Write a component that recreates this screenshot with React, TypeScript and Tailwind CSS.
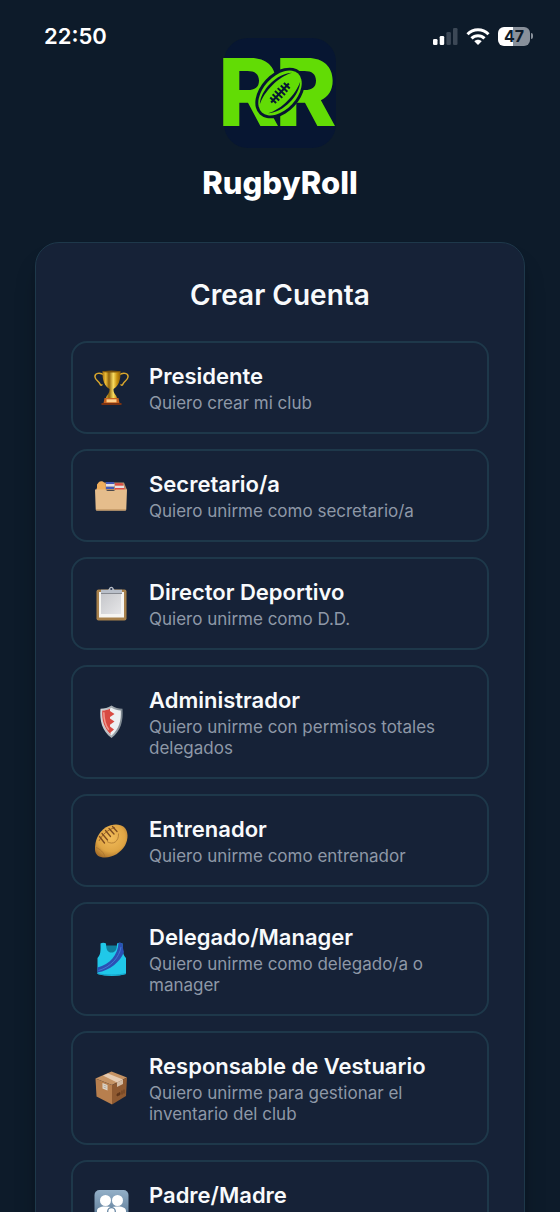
import type { ReactNode } from "react";

function TrophyIcon() {
    return (
        <svg viewBox="0 0 36 36" className="size-9" aria-hidden="true">
            <defs>
                <linearGradient id="gold" x1="0" x2="1">
                    <stop offset="0" stopColor="#a87411" />
                    <stop offset=".18" stopColor="#edbd38" />
                    <stop offset=".36" stopColor="#8d610c" />
                    <stop offset=".6" stopColor="#f8dc62" />
                    <stop offset=".8" stopColor="#c9920f" />
                    <stop offset="1" stopColor="#8f5f08" />
                </linearGradient>
            </defs>
            <path d="M11 5C7 2 1.500 3 2 7c.4 3.500 4 4 5 7 .5 1.500 2 1.500 2 .3M26 5c4-3 9.500-2 9 2-.4 3.500-4 4-5 7-.5 1.500-2 1.500-2 .3" fill="none" stroke="#d9a62c" strokeWidth="1.500" />
            <path d="M9.500 1.200h18c.3 9-2 14.800-7 17.800 0 2 .3 3.500 1.300 5 1 1.500 2.200 2.500 2.200 4.500H13c0-2 1.200-3 2.200-4.500 1-1.500 1.300-3 1.300-5-5-3-7.300-8.800-7-17.800z" fill="url(#gold)" />
            <ellipse cx="18.500" cy="1.600" rx="9" ry="1" fill="#7d540a" />
            <path d="M11.500 28h14l1 5.500h-16z" fill="#c8641f" />
            <path d="M13.500 29.300h10v3h-10z" fill="#ffd18c" />
            <path d="M8.500 33h20v2h-20z" fill="#7c3211" />
        </svg>
    );
}

function CardBoxIcon() {
    return (
        <svg viewBox="0 0 36 36" className="size-9" aria-hidden="true">
            <path d="M3 12 6 4.500h25l3 7.500z" fill="#b78d67" />
            <path d="M4 6.500 6 4c1-1 4-1 5 .5l1.500 1.500V12H4z" fill="#f0ae5c" />
            <path d="M13 4h8l.5 2H13zM13 8.500h8V11h-8z" fill="#4258b8" />
            <path d="M13 6h8.500v2.500H13zM22 7.500h9V10h-9z" fill="#e6dfe2" />
            <path d="M22 5.200h7.500l1 2.300H22zM22 10h9.500v2.500H22z" fill="#dd4b43" />
            <path d="M2 11.500h10.500c.8 0 1 1.300 2 1.300h6c1 0 1.500-1.300 2.500-1.300h11L33.300 31c0 1-.5 1.500-1.300 1.500H4c-.8 0-1.300-.5-1.300-1.500z" fill="#e5bd8c" />
            <path d="M3 31h30v.5c0 .7-.5 1-1.300 1H4.300c-.8 0-1.300-.3-1.300-1z" fill="#caa06e" />
        </svg>
    );
}

function ClipboardIcon() {
    return (
        <svg viewBox="0 0 36 36" className="size-9" aria-hidden="true">
            <defs>
                <linearGradient id="sheet" x1="0" y1="0" x2="1" y2="1">
                    <stop offset="0" stopColor="#c6c7cb" />
                    <stop offset="1" stopColor="#e6e6e8" />
                </linearGradient>
            </defs>
            <rect x="3.500" y="3.500" width="30" height="31" rx="2" fill="#a8814c" />
            <rect x="6" y="6" width="25" height="25.500" fill="#f6f5f2" />
            <path d="M8 8h20v20H8z" fill="url(#sheet)" />
            <path d="M8 7.300h21" stroke="#6c7078" strokeWidth="1" />
            <path d="M8 3.700h7c1.200 0 .8-3 3.300-3s2.200 3 3.400 3H29v3.200H8z" fill="#b9bfc9" />
            <circle cx="18.300" cy="3" r="1.100" fill="#26344b" />
        </svg>
    );
}

function ShieldIcon() {
    return (
        <svg viewBox="0 0 36 36" className="size-9" aria-hidden="true">
            <defs>
                <linearGradient id="steel" x1="0" x2="1">
                    <stop offset="0" stopColor="#d5d8da" />
                    <stop offset="1" stopColor="#77828b" />
                </linearGradient>
            </defs>
            <path d="M18.500 1.500c3.500 2.500 7 3.200 11 3.200 1 12-1.500 22-11 29.300C9 26.700 6.500 16.700 7.500 4.700c4 0 7.500-.7 11-3.200z" fill="url(#steel)" />
            <path d="M18.500 3.700c3 2 6 2.700 9.300 2.800.6 10.500-1.800 18.500-9.300 25-7.500-6.500-9.900-14.500-9.300-25 3.300-.1 6.300-.8 9.300-2.800z" fill="#edf0f2" />
            <path d="M17 4.700v2.300l4.500 3-4.500 3v1.600l4.500 3-4.500 3.200v1.600l4 3-3.500 3v1.800c-6.500-6.300-8.800-13.800-8.300-23.700 2.800-.1 5.400-.6 7.800-1.800z" fill="#d84a42" />
            <path d="M10.800 8.300c0 8 1.500 13 5 17.500" fill="none" stroke="#f2978c" strokeWidth="1.500" />
        </svg>
    );
}

function BallIcon() {
    return (
        <svg viewBox="0 0 36 36" className="size-9" aria-hidden="true">
            <defs>
                <radialGradient id="leather" cx=".5" cy=".4" r=".65">
                    <stop offset="0" stopColor="#f2bc5a" />
                    <stop offset=".65" stopColor="#dfa544" />
                    <stop offset="1" stopColor="#a8702a" />
                </radialGradient>
            </defs>
            <path d="M2 27C1.500 18 5.500 9 12.500 4.500 19 .5 27 .5 31 4c4.500 4 4.500 12 1 18.500-4 7-12 12-20 12-6 0-9.500-2.500-10-7.500z" fill="url(#leather)" />
            <path d="M3 24.500c4 1.500 8 5 9 9.500M14 18.500c6 4 12 0 11.500-8" fill="none" stroke="#a9752f" strokeWidth=".8" />
            <path d="M6 18C9 12 14 7 22 4.500" stroke="#8b5521" strokeWidth=".8" fill="none" />
            <path d="M6.500 13.500l5 6.500M9 10.500l5.500 6.500M12.500 7.500l5 6M16 5.500l5 5.500M19.500 3.500l4.500 5" stroke="#7d4b20" strokeWidth="1.300" strokeLinecap="round" />
        </svg>
    );
}

function VestIcon() {
    return (
        <svg viewBox="0 0 36 36" className="size-9" aria-hidden="true">
            <path d="M11 4.500h15V17H11z" fill="#0f7f9c" />
            <path d="M7.500 2.500c1.500-1 4-1 5.500 0 .2 6.500 1.700 9 5.500 9s5.500-2.500 5.500-9c1.500-1 4-1 5.500 0 .2 8 .5 11.500 3.500 14.500v16c-7 2.500-21 2.500-28.500 0V17c3-3 3.200-6.500 3-14.500z" fill="#20c8e9" />
            <path d="M4.500 32.500c8 2 20.500 2 28.500 0" fill="none" stroke="#14a1c7" strokeWidth="1" />
            <path d="M25.500 2c1.500-.5 2.700-.3 4 .5.5 3.500.5 6 1.500 8.500C27 21 17 29.500 4.500 31.500V26.500C17 23.500 25 13.500 25.500 2z" fill="#2b50b4" />
            <path d="M5.500 29.500C18 26 26.500 16 28 6" fill="none" stroke="#4277d1" strokeWidth="1" />
        </svg>
    );
}

function PackageIcon() {
    return (
        <svg viewBox="0 0 36 36" className="size-9" aria-hidden="true">
            <path d="m18.500 1.500 15.500 6-15 7.500L2.500 8.500z" fill="#c59364" />
            <path d="M2.500 8.500 19 15v19.500l-15.500-8z" fill="#b77f4e" />
            <path d="M19 15 34 7.500 33 26l-14 8.500z" fill="#8f5a31" />
            <path d="m10 5.500 5-2L30 9.500l-6 3z" fill="#e5cbb2" />
            <path d="m24 12.500 6-3V14l-6 3z" fill="#d3bca5" />
            <path d="m9.500 13 5 2v5.500l-5-2z" fill="#dfd7cb" />
            <path d="m10.500 15 3 1.200M10.500 17l3 1.200" stroke="#9a8d80" strokeWidth=".6" />
            <path d="m24 24 3-1.500v2.200L24 26zM29 20.500v4M31 19.500v4" stroke="#5e351a" strokeWidth=".8" fill="#5e351a" />
        </svg>
    );
}

function FamilyIcon() {
    return (
        <svg viewBox="0 0 36 36" className="size-9" aria-hidden="true">
            <defs>
                <linearGradient id="tile" y1="0" y2="1" x2="0">
                    <stop offset="0" stopColor="#93afc7" />
                    <stop offset="1" stopColor="#51708e" />
                </linearGradient>
            </defs>
            <rect x="1.500" y="1" width="34" height="34" rx="5" fill="url(#tile)" />
            <g fill="#fff">
                <circle cx="12.500" cy="11.500" r="5.500" />
                <circle cx="24.500" cy="11.500" r="5.500" />
                <path d="M4 31V22c0-3 3-4.500 8-4.500s6.500 1 6.500 1 1.500-1 6.500-1 8 1.500 8 4.500v9z" />
            </g>
            <circle cx="18.500" cy="22.500" r="3.800" fill="#fff" stroke="#6585a2" strokeWidth="1.300" />
            <path d="M12.500 31c0-3 2-4 6-4s6 1 6 4" fill="none" stroke="#6585a2" strokeWidth="1.300" />
        </svg>
    );
}

type Role = { title: string; description: string; icon: ReactNode };

const roles: Role[] = [
    { title: "Presidente", description: "Quiero crear mi club", icon: <TrophyIcon /> },
    { title: "Secretario/a", description: "Quiero unirme como secretario/a", icon: <CardBoxIcon /> },
    { title: "Director Deportivo", description: "Quiero unirme como D.D.", icon: <ClipboardIcon /> },
    { title: "Administrador", description: "Quiero unirme con permisos totales delegados", icon: <ShieldIcon /> },
    { title: "Entrenador", description: "Quiero unirme como entrenador", icon: <BallIcon /> },
    { title: "Delegado/Manager", description: "Quiero unirme como delegado/a o manager", icon: <VestIcon /> },
    { title: "Responsable de Vestuario", description: "Quiero unirme para gestionar el inventario del club", icon: <PackageIcon /> },
    { title: "Padre/Madre", description: "", icon: <FamilyIcon /> },
];

function StatusBar() {
    return (
        <div className="absolute inset-x-0 top-0 z-10 flex h-18 items-center justify-between pr-[27px] pl-11 text-white">
            <span className="text-[22px] font-semibold">22:50</span>
            <div className="flex items-center gap-2">
                <svg viewBox="0 0 25 17" className="h-[17px] w-[25px]" aria-hidden="true">
                    <rect x="0" y="11" width="4.500" height="6" rx="1.300" fill="#fff" />
                    <rect x="6.700" y="8" width="4.500" height="9" rx="1.300" fill="#fff" />
                    <rect x="13.400" y="4" width="4.500" height="13" rx="1.300" fill="#3c4856" />
                    <rect x="20" y="0" width="4.500" height="17" rx="1.300" fill="#3c4856" />
                </svg>
                <svg viewBox="0 0 24 17" className="h-[17px] w-6" fill="none" stroke="#fff" strokeWidth="3" aria-hidden="true">
                    <path d="M1.500 6.200C7.300.3 16.700.3 22.500 6.200" />
                    <path d="M5.500 10.400c3.600-3.700 9.400-3.700 13 0" />
                    <path d="M12 17l-3.700-3.700c2-2 5.400-2 7.400 0z" fill="#fff" stroke="none" />
                </svg>
                <div className="flex items-center gap-px">
                    <span className="flex h-[19px] w-8 items-center justify-center rounded-md bg-linear-to-r from-white from-47% to-[#88909a] to-47% text-base font-bold text-[#0d1b2a]">
                        47
                    </span>
                    <span className="h-1.5 w-0.5 rounded-r-full bg-[#88909a]" />
                </div>
            </div>
        </div>
    );
}

function Logo() {
    return (
        <svg viewBox="0 0 112 112" className="size-28 overflow-visible" role="img" aria-label="RugbyRoll">
            <rect width="112" height="110" rx="24" fill="#071632" />
            <g fill="#62dc05" fontSize="93" fontWeight="800" className="font-[Inter,sans-serif]">
                <text x="-6" y="88">R</text>
                <text x="51" y="88">R</text>
            </g>
            <g transform="translate(56 55) rotate(-47)">
                <ellipse rx="29.500" ry="19.500" fill="#071632" />
                <ellipse rx="26.500" ry="16.500" fill="#62dc05" />
                <path d="M-22-7C-12-16 12-16 23-5 11-12.500-10-12.500-22-7zM-23 5C-12 16 12 16 22 7 10 12.500-11 12.500-23 5z" fill="#071632" />
                <path d="M-13 0h26M-10-4v8M-6-4.500v9M-2-5v10M2-5v10M6-4.500v9M10-4v8" stroke="#071632" strokeWidth="2" />
            </g>
        </svg>
    );
}

function RoleCard({ title, description, icon }: Role) {
    return (
        <button
            type="button"
            className="flex w-full items-center gap-5 rounded-2xl border-2 border-[#1e384a] px-5 py-[18px] text-left"
        >
            <span className="shrink-0">{icon}</span>
            <span className="min-w-0 flex-1 pt-[3px]">
                <span className="block text-[22px] leading-6 font-semibold text-[#f8fafc]">{title}</span>
                <span className="mt-[5px] block min-h-[21px] text-[17px] leading-[21px] text-[#8e98a7]">{description}</span>
            </span>
        </button>
    );
}

export default function App() {
    return (
        <div className="relative h-screen overflow-hidden bg-[#0d1b2a] font-[Inter,'Liberation_Sans',sans-serif]">
            <StatusBar />
            <div className="h-full overflow-y-auto px-[35px] pt-[38px] pb-9 [scrollbar-width:none]">
                <header className="flex flex-col items-center">
                    <Logo />
                    <h1 className="mt-[13px] text-[31px] leading-10 font-extrabold text-white">RugbyRoll</h1>
                </header>
                <main className="mt-[39px] rounded-3xl border border-[#1e384a] bg-[#162237] px-[35px] pt-8 pb-9 shadow-xl shadow-black/30">
                    <h2 className="text-center text-[28px] leading-10 font-semibold text-[#f8fafc]">Crear Cuenta</h2>
                    <div className="mt-[26px] flex flex-col gap-[15px]">
                        {roles.map((role) => (
                            <RoleCard key={role.title} {...role} />
                        ))}
                    </div>
                </main>
            </div>
        </div>
    );
}
